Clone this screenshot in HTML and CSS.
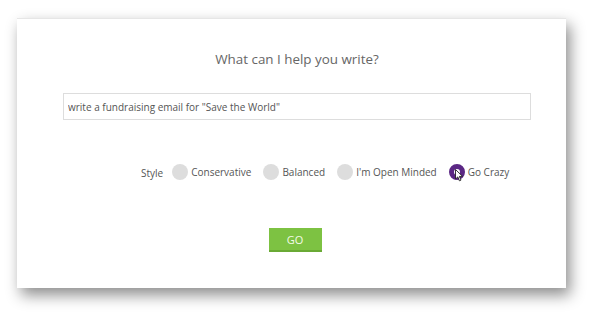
FILE: index.html
```html
<!DOCTYPE html>
<html lang="en">
<head>
    <meta charset="UTF-8">
    <title>Writer</title>
    <link rel="stylesheet" href="styles.css">
</head>
<body>
    <!-- Caixa principal -->
    <div class="card">
        <h1>What can I help you write?</h1>
        <input class="prompt" type="text" value="write a fundraising email for &quot;Save the World&quot;">

        <div class="style-row">
            <span class="style-label">Style</span>
            <label class="option"><span class="radio"></span>Conservative</label>
            <label class="option"><span class="radio"></span>Balanced</label>
            <label class="option"><span class="radio"></span>I'm Open Minded</label>
            <label class="option">
                <span class="radio checked">
                    <svg class="cursor" width="9" height="13" viewBox="0 0 9 13">
                        <path d="M0.5 0.5 L0.5 10 L2.8 7.9 L4.4 11.8 L6 11.1 L4.4 7.4 L7.6 7.4 Z" fill="#fff" stroke="#222" stroke-width="0.9" stroke-linejoin="round"/>
                    </svg>
                </span>Go Crazy
            </label>
        </div>

        <button class="go">GO</button>
    </div>
</body>
</html>
```

FILE: styles.css
```css
/* Estilo Global */
body {
    font-family: 'Open Sans', sans-serif;
    margin: 0;
    padding: 18px 26px 27px 17px;
    background: #fff;
}

.card {
    height: 270px;
    box-sizing: border-box;
    background: #fff;
    border-top: 1px solid #e6e6e6;
    box-shadow: 4px 7px 14px rgba(0, 0, 0, 0.45);
    padding: 31px 35px 0 46px;
    display: flex;
    flex-direction: column;
    align-items: center;
}

.card h1 {
    font-size: 13.4px;
    font-weight: 400;
    color: #666;
    margin: 0 0 25px;
}

.prompt {
    width: 100%;
    height: 27px;
    box-sizing: border-box;
    border: 1px solid #ddd;
    padding: 0 4px;
    font-family: inherit;
    font-size: 10px;
    color: #555;
}

.style-row {
    align-self: flex-start;
    display: flex;
    align-items: center;
    margin-top: 43px;
    margin-left: 78px;
    font-size: 10px;
    color: #555;
}

.style-label {
    margin-right: 9px;
    margin-top: 3px;
}

.option {
    display: flex;
    align-items: center;
    margin-right: 12px;
}

.radio {
    width: 16px;
    height: 16px;
    border-radius: 50%;
    background: #ddd;
    margin-right: 3px;
}

.radio.checked {
    position: relative;
    box-sizing: border-box;
    background: #fff;
    border: 5px solid #5b2784;
}

.cursor {
    position: absolute;
    left: 1px;
    top: 0;
}

.go {
    margin-top: 48px;
    margin-right: 4px;
    width: 53px;
    height: 24px;
    background: #7dc242;
    border: none;
    border-bottom: 2px solid #6aaa35;
    color: #f4fbe9;
    font-family: inherit;
    font-size: 11px;
    padding: 0;
}
```
